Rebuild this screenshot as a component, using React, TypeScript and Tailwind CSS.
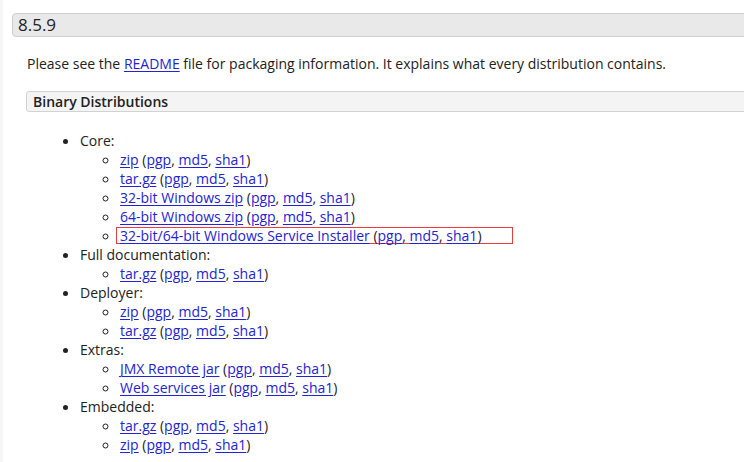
const LINK = 'text-[#2323d6] underline underline-offset-2';

type Item = { label: string; highlight?: boolean };
type Group = { title: string; items: Item[] };

const groups: Group[] = [
  {
    title: 'Core:',
    items: [
      { label: 'zip' },
      { label: 'tar.gz' },
      { label: '32-bit Windows zip' },
      { label: '64-bit Windows zip' },
      { label: '32-bit/64-bit Windows Service Installer', highlight: true },
    ],
  },
  { title: 'Full documentation:', items: [{ label: 'tar.gz' }] },
  { title: 'Deployer:', items: [{ label: 'zip' }, { label: 'tar.gz' }] },
  { title: 'Extras:', items: [{ label: 'JMX Remote jar' }, { label: 'Web services jar' }] },
  { title: 'Embedded:', items: [{ label: 'tar.gz' }, { label: 'zip' }] },
];

function Download({ item }: { item: Item }) {
  return (
    <span
      className={
        item.highlight
          ? 'inline-block -ml-[4px] pl-[3px] pr-[30px] border border-[#e5403f] leading-[15px]'
          : ''
      }
    >
      <a href="#" className={LINK}>{item.label}</a> (
      <a href="#" className={LINK}>pgp</a>, <a href="#" className={LINK}>md5</a>,{' '}
      <a href="#" className={LINK}>sha1</a>)
    </span>
  );
}

export default function App() {
  return (
    <div
      className="w-[744px] h-[462px] overflow-hidden bg-white text-[#222] border-l-[3px] border-[#f6f6f6]"
      style={{ fontFamily: '"Open Sans", "Liberation Sans", sans-serif' }}
    >
      <div className="pl-[9px] pt-[13px]">
        {/* Version header */}
        <h2 className="h-[24px] mr-[-20px] flex items-center pl-[5px] text-[17px] font-normal bg-[#e9e9e9] border border-[#cfcfcf] rounded-l-[4px]">
          8.5.9
        </h2>

        <div className="pl-[14px]">
          <p className="mt-[17px] ml-[1px] text-[14px] leading-[19px]">
            Please see the <a href="#" className={LINK}>README</a> file for packaging information. It
            explains what every distribution contains.
          </p>

          {/* Section header */}
          <h3 className="mt-[18px] h-[21px] mr-[-20px] flex items-center pl-[6px] text-[14px] font-semibold bg-[#f4f4f4] border border-[#d2d2d2] rounded-l-[3px]">
            Binary Distributions
          </h3>

          <ul className="mt-[19px] ml-[54px] list-disc text-[14px] leading-[19px] marker:text-[15px]">
            {groups.map((g) => (
              <li key={g.title}>
                {g.title}
                <ul className="ml-[40px] list-[circle]">
                  {g.items.map((it, i) => (
                    <li key={i}>
                      <Download item={it} />
                    </li>
                  ))}
                </ul>
              </li>
            ))}
          </ul>
        </div>
      </div>
    </div>
  );
}
